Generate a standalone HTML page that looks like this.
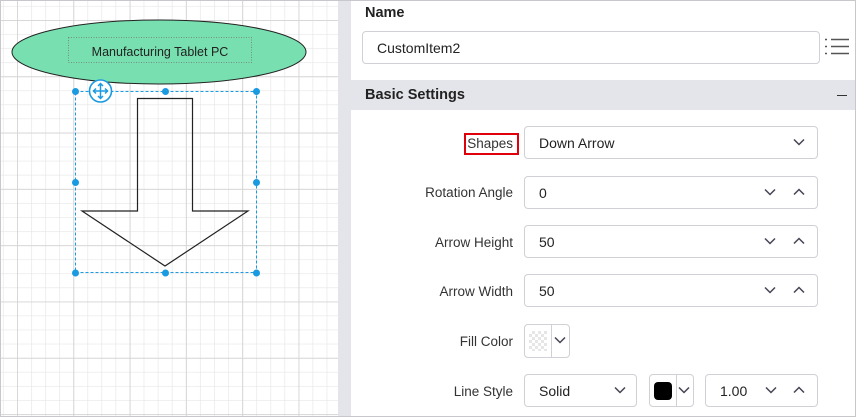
<!DOCTYPE html>
<html><head><meta charset="utf-8"><style>
*{box-sizing:border-box;margin:0;padding:0}
body{width:856px;height:417px;overflow:hidden;background:#fff;font-family:"Liberation Sans",sans-serif;position:relative;font-size:13px;color:#212121}
.abs{position:absolute}
.lbl{position:absolute;right:343px;font-size:13.5px;color:#333;text-align:right}
.box{position:absolute;border:1px solid #d0d0d6;border-radius:4px;background:#fff;font-size:14px;color:#222;padding-left:14px;display:flex;align-items:center}
.chev{position:absolute;top:50%;width:12px;height:8px;margin-top:-5px}
</style></head><body>
<svg class="abs" style="left:0;top:0" width="338" height="417">
<defs>
<pattern id="mn" x="17" y="20" width="14.075" height="14.075" patternUnits="userSpaceOnUse"><path d="M0 0H14.075M0 0V14.075" stroke="#e6e6e6" stroke-width="1.3" fill="none"/></pattern>
<pattern id="mj" x="17" y="20" width="56.3" height="56.3" patternUnits="userSpaceOnUse"><path d="M0 0H56.3M0 0V56.3" stroke="#d4d4d4" stroke-width="1.8" fill="none"/></pattern>
</defs>
<rect width="338" height="417" fill="#fff"/>
<rect width="338" height="417" fill="url(#mn)"/>
<rect width="338" height="417" fill="url(#mj)"/>
<ellipse cx="159" cy="52" rx="147" ry="32" fill="#78e0b0" stroke="#222" stroke-width="1"/>
<rect x="68.5" y="37.5" width="183" height="25" fill="none" stroke="#777" stroke-width="0.8" stroke-dasharray="1,1.5"/>
<text x="160" y="56" text-anchor="middle" font-family="Liberation Sans" font-size="12.5" fill="#222">Manufacturing Tablet PC</text>
<polygon points="137.5,98.5 192.5,98.5 192.5,211 248,211 165,266 82,211 137.5,211" fill="none" stroke="#222" stroke-width="1.2"/>
<rect x="75.5" y="91.5" width="181" height="181" fill="none" stroke="#1a9ae0" stroke-dasharray="3,2"/>
<g fill="#1a9ae0"><circle cx="75.5" cy="91.5" r="3.5"/><circle cx="165.5" cy="91.5" r="3.5"/><circle cx="256.5" cy="91.5" r="3.5"/><circle cx="75.5" cy="182.5" r="3.5"/><circle cx="256.5" cy="182.5" r="3.5"/><circle cx="75.5" cy="273" r="3.5"/><circle cx="165.5" cy="273" r="3.5"/><circle cx="256.5" cy="273" r="3.5"/></g>
<circle cx="100.5" cy="91" r="11" fill="#fff" stroke="#1a9ae0" stroke-width="1.6"/>
<g stroke="#1a9ae0" stroke-width="1.5" fill="none"><path d="M93 91H108M100.5 83.5V98.5"/><path d="M96 88.5L93.5 91L96 93.5M105 88.5L107.5 91L105 93.5M98 86L100.5 83.5L103 86M98 96L100.5 98.5L103 96"/></g>
</svg>
<div class="abs" style="left:338px;top:0;width:13px;height:417px;background:#e4e5ea"></div>
<div class="abs" style="left:0;top:0;width:856px;height:417px;border:1px solid #c8c8cc;pointer-events:none"></div>
<div class="abs" style="left:365px;top:5px;font-weight:bold;font-size:14.5px;color:#222">Name</div>
<div class="box" style="left:362px;top:31px;width:458px;height:33px">CustomItem2</div>
<svg class="abs" style="left:824px;top:37px" width="26" height="20"><g stroke="#555" stroke-width="1.5"><path d="M1 2.5H3M7 2.5H25M1 9.5H3M7 9.5H25M1 16.5H3M7 16.5H25"/></g></svg>
<div class="abs" style="left:351px;top:80px;width:504px;height:30px;background:#e4e5ea"></div>
<div class="abs" style="left:365px;top:87px;font-weight:bold;font-size:14.5px;color:#222">Basic Settings</div>
<div class="abs" style="left:837px;top:95px;width:10px;height:1px;background:#333"></div>
<div class="abs" style="left:464px;top:133px;width:55px;height:22px;border:2px solid #e0000c"></div>
<div class="lbl" style="top:136px">Shapes</div>
<div class="lbl" style="top:185px">Rotation Angle</div>
<div class="lbl" style="top:235px">Arrow Height</div>
<div class="lbl" style="top:284px">Arrow Width</div>
<div class="lbl" style="top:334px">Fill Color</div>
<div class="lbl" style="top:384px">Line Style</div>
<svg width="0" height="0" style="position:absolute"><defs><path id="dn" d="M1 1.5L6 6.5L11 1.5" stroke="#445" stroke-width="1.5" fill="none"/><path id="up" d="M1 6.5L6 1.5L11 6.5" stroke="#445" stroke-width="1.5" fill="none"/></defs></svg>
<div class="box" style="left:524px;top:126px;width:294px;height:33px">Down Arrow<svg class="chev" style="right:12px"><use href="#dn"/></svg></div>
<div class="box" style="left:524px;top:176px;width:294px;height:33px">0<svg class="chev" style="right:41px"><use href="#dn"/></svg><svg class="chev" style="right:12px"><use href="#up"/></svg></div>
<div class="box" style="left:524px;top:225px;width:294px;height:33px">50<svg class="chev" style="right:41px"><use href="#dn"/></svg><svg class="chev" style="right:12px"><use href="#up"/></svg></div>
<div class="box" style="left:524px;top:274px;width:294px;height:33px">50<svg class="chev" style="right:41px"><use href="#dn"/></svg><svg class="chev" style="right:12px"><use href="#up"/></svg></div>
<div class="box" style="left:524px;top:324px;width:46px;height:34px;padding:0">
<div class="abs" style="left:4px;top:6px;width:18px;height:20px;background:repeating-conic-gradient(#e6e6e6 0 25%,#fff 0 50%) 0 0/6px 6px"></div>
<div class="abs" style="left:26px;top:0;width:1px;height:32px;background:#d0d0d6"></div>
<svg class="chev" style="right:3px;width:12px"><use href="#dn"/></svg></div>
<div class="box" style="left:524px;top:374px;width:113px;height:33px">Solid<svg class="chev" style="right:10px"><use href="#dn"/></svg></div>
<div class="box" style="left:649px;top:374px;width:45px;height:33px;padding:0">
<div class="abs" style="left:4px;top:7px;width:18px;height:18px;background:#000;border-radius:4px"></div>
<div class="abs" style="left:26px;top:0;width:1px;height:31px;background:#d0d0d6"></div>
<svg class="chev" style="right:3px"><use href="#dn"/></svg></div>
<div class="box" style="left:705px;top:374px;width:113px;height:33px">1.00<svg class="chev" style="right:40px"><use href="#dn"/></svg><svg class="chev" style="right:12px"><use href="#up"/></svg></div>
</body></html>
